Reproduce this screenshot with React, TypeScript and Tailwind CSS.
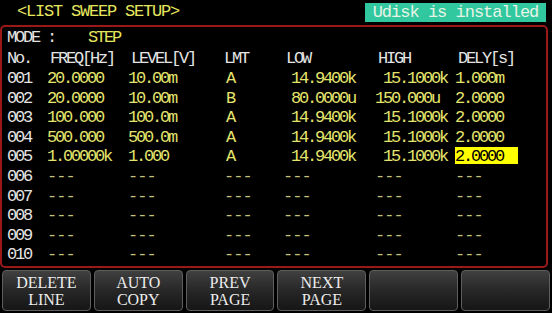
const rows = [
  { no: "001", freq: "20.0000", level: "10.00m", lmt: "A", low: " 14.9400k", high: " 15.1000k", dely: "1.000m" },
  { no: "002", freq: "20.0000", level: "10.00m", lmt: "B", low: " 80.0000u", high: "150.000u", dely: "2.0000" },
  { no: "003", freq: "100.000", level: "100.0m", lmt: "A", low: " 14.9400k", high: " 15.1000k", dely: "2.0000" },
  { no: "004", freq: "500.000", level: "500.0m", lmt: "A", low: " 14.9400k", high: " 15.1000k", dely: "2.0000" },
  { no: "005", freq: "1.00000k", level: "1.000", lmt: "A", low: " 14.9400k", high: " 15.1000k", dely: "2.0000", active: true },
  { no: "006" },
  { no: "007" },
  { no: "008" },
  { no: "009" },
  { no: "010" },
];

const buttons = [["DELETE", "LINE"], ["AUTO", "COPY"], ["PREV", "PAGE"], ["NEXT", "PAGE"], [], []];

const cols = "grid grid-cols-[40px_81px_96px_59px_92px_80px_1fr]";

function Dash() {
  return <span className="text-[#c4c47a] tracking-[-1px]">---</span>;
}

export default function App() {
  return (
    <div className="w-[552px] h-[313px] bg-black flex flex-col overflow-hidden font-['Liberation_Mono',monospace]">
      {/* top bar */}
      <div className="h-[25px] flex justify-between items-start">
        <div className="pl-[17px] pt-[2px] text-[17px] leading-[20px] tracking-[-1.2px] text-[#e6e65e] whitespace-pre">
          {"<LIST SWEEP SETUP>"}
        </div>
        <div className="mt-[3px] mr-[6px] h-[19px] w-[181px] bg-[#31c79f] text-[#e8f4e6] text-[17px] leading-[19px] tracking-[-1px] flex items-center justify-center">
          Udisk is installed
        </div>
      </div>

      {/* table panel */}
      <div className="w-[548px] h-[243px] border-2 border-[#9a1818] rounded-[5px] pl-[5px] text-[17px] tracking-[-2.2px]">
        <div className="h-[21px] leading-[21px] text-[#e4e4e4] whitespace-pre">
          MODE :<span className="ml-[33px] text-[#e6e65e]">STEP</span>
        </div>
        <div className={`${cols} h-[21px] leading-[21px] text-[#e4e4e4]`}>
          <span>No.</span>
          <span className="ml-[3px]">FREQ[Hz]</span>
          <span className="ml-[3px]">LEVEL[V]</span>
          <span>LMT</span>
          <span className="ml-[3px]">LOW</span>
          <span className="ml-[3px]">HIGH</span>
          <span className="ml-[3px]">DELY[s]</span>
        </div>
        {rows.map((r) => (
          <div key={r.no} className={`${cols} h-[19.6px] leading-[19.6px] text-[#e4e46c] whitespace-pre`}>
            <span className="text-[#e4e4e4]">{r.no}</span>
            {r.freq ? (
              <>
                <span>{r.freq}</span>
                <span>{r.level}</span>
                <span className="ml-[2px]">{r.lmt}</span>
                <span>{r.low}</span>
                <span>{r.high}</span>
                {r.active ? (
                  <span className="w-[63px] h-[17px] leading-[20px] bg-[#ffff00] text-black">{r.dely}</span>
                ) : (
                  <span>{r.dely}</span>
                )}
              </>
            ) : (
              <>
                <Dash />
                <Dash />
                <Dash />
                <Dash />
                <Dash />
                <Dash />
              </>
            )}
          </div>
        ))}
      </div>

      {/* soft keys */}
      <div className="mt-[2px] h-[41px] px-[2px] flex gap-[3px]">
        {buttons.map((b, i) => (
          <div
            key={i}
            className="w-[89px] h-full rounded-[4px] border border-[#5e5e5e] bg-gradient-to-b from-[#404040] via-[#272727] to-[#161616] flex flex-col items-center justify-center text-[#ececec] text-[16px] leading-[17px] font-['Liberation_Serif',serif]"
          >
            {b.map((t) => (
              <span key={t}>{t}</span>
            ))}
          </div>
        ))}
      </div>
    </div>
  );
}
